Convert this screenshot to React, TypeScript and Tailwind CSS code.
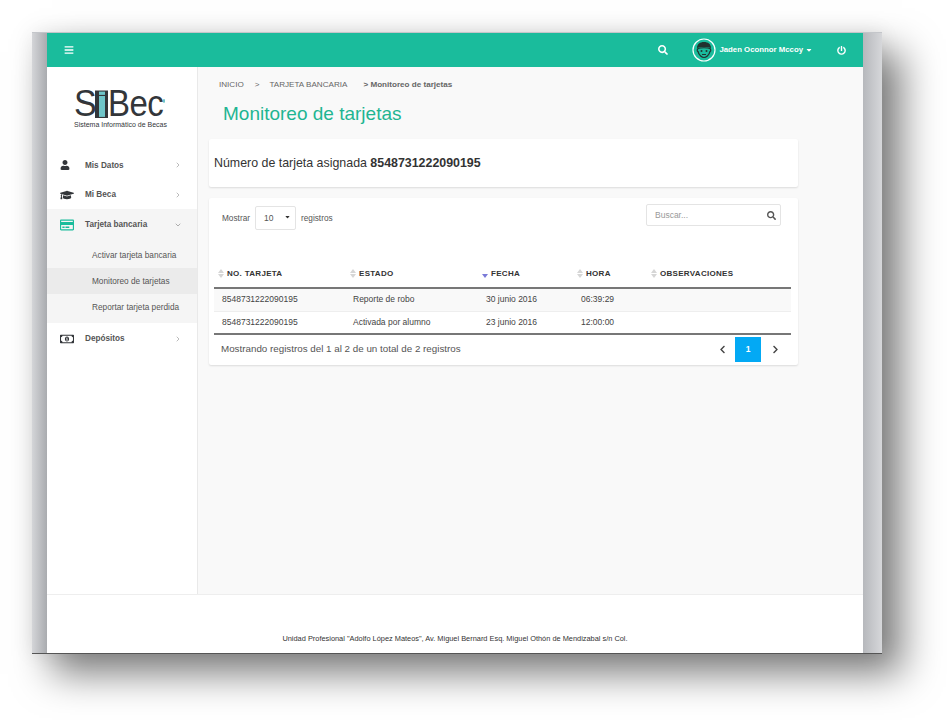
import { FaBars, FaSearch, FaPowerOff, FaUser, FaGraduationCap, FaRegCreditCard, FaRegMoneyBillAlt, FaChevronLeft, FaChevronRight, FaSortDown, FaCaretDown } from 'react-icons/fa'
import { LuChevronRight, LuChevronDown } from 'react-icons/lu'

function Avatar() {
	return (
		<svg width="24" height="24" viewBox="0 0 24 24" className="shrink-0">
			<circle cx="12" cy="12" r="11" fill="#1abc9c" stroke="#fff" strokeWidth="1.2" />
			<path d="M5 10c0-4 3-6 7-6s7 2 7 6c-2-1.500-12-1.500-14 0z" fill="#22332f" />
			<path d="M6 10.500c2-1 10-1 12 0 1 1 1 3 0 3-1 4-4 6-6 6s-5-2-6-6c-1 0-1-2 0-3z" fill="#1abc9c" stroke="#22332f" strokeWidth="1.2" />
			<circle cx="9.500" cy="13" r="1" fill="#22332f" />
			<circle cx="14.500" cy="13" r="1" fill="#22332f" />
			<path d="M10 16.500h4" stroke="#22332f" strokeWidth="1" />
		</svg>
	)
}

function Logo() {
	return (
		<div className="flex w-[91px] flex-col">
			<div className="relative flex h-[27px] origin-bottom scale-y-[1.1] items-end text-[#33363a]">
				<span className="w-[21px] text-[34px] font-normal leading-[27px]">S</span>
				<span className="flex h-[25px] w-[13px] flex-col items-center justify-between bg-[#33363a] py-[1px]">
					<span className="h-[3px] w-[6px] bg-[#6fc5c9]" />
					<span className="h-[19px] w-[6px] bg-[#6fc5c9]" />
				</span>
				<span className="text-[33px] leading-[27px] tracking-[-0.5px]">Bec</span>
				<span className="absolute right-0 top-[10px] h-[3px] w-[2px] bg-[#6fc5c9]" />
			</div>
			<span className="mt-[3px] whitespace-nowrap text-[7px] leading-[8px] text-[#33363a]">Sistema Informático de Becas</span>
		</div>
	)
}

function NavRow({ icon, label, open, teal, tall }: { icon: React.ReactNode; label: string; open?: boolean; teal?: boolean; tall?: boolean }) {
	return (
		<div className={`flex items-center pl-[13px] pr-[15px] ${tall ? 'h-[31px]' : 'h-[30px]'}`}>
			<span className={`flex w-[25px] items-center text-[14px] ${teal ? 'text-[#1abc9c]' : 'text-[#33363a]'}`}>{icon}</span>
			<span className="flex-1 pt-[2px] text-[8.2px] font-bold text-[#555]">{label}</span>
			{open ? <LuChevronDown className="text-[8px] text-[#888]" /> : <LuChevronRight className="text-[8px] text-[#999]" />}
		</div>
	)
}

function SortIcon({ active }: { active?: boolean }) {
	return (
		<span className="mr-[3px] inline-flex w-[6px] flex-col items-center align-middle">
			<span className={`h-0 w-0 border-x-[3px] border-b-[4px] border-x-transparent ${active ? 'border-b-transparent' : 'border-b-[#d6d6d6]'}`} />
			<span className={`mt-[1px] h-0 w-0 border-x-[3px] border-t-[4px] border-x-transparent ${active ? 'border-t-[#7a7ad8]' : 'border-t-[#d6d6d6]'}`} />
		</span>
	)
}

const rows = [
	['8548731222090195', 'Reporte de robo', '30 junio 2016', '06:39:29'],
	['8548731222090195', 'Activada por alumno', '23 junio 2016', '12:00:00'],
]

export default function App() {
	return (
		<div className="h-[720px] w-[947px] overflow-hidden bg-white pl-[32px] pt-[32px] font-['Liberation_Sans',Arial,sans-serif]">
			{/* ventana con sombra y bandas grises a los lados */}
			<div className="flex h-[622px] w-[850px] border-t border-b border-t-[#c4c6ca] border-b-[#555] bg-[linear-gradient(90deg,#d4d5d8_0,#a9abaf_15px,#b6b8bc_831px,#d6d7da_100%)] shadow-[20px_20px_36px_rgba(0,0,0,0.5),0_0_20px_rgba(0,0,0,0.08)]">
				<div className="ml-[15px] flex h-full w-[816px] flex-col bg-white">
					<header className="flex h-[34px] shrink-0 items-center bg-[#1abc9c] text-white">
						<FaBars className="ml-[17px] text-[10px]" />
						<div className="flex-1" />
						<FaSearch className="text-[10px]" />
						<div className="ml-[24px] flex items-center">
							<Avatar />
							<span className="ml-[3px] text-[7.8px] font-bold">Jaden Oconnor Mccoy</span>
							<FaCaretDown className="ml-[2px] text-[8px]" />
						</div>
						<FaPowerOff className="ml-[24px] mr-[17px] text-[9px]" />
					</header>

					<div className="flex flex-1">
						<aside className="w-[151px] shrink-0 border-r border-r-[#e9e9e9] bg-white">
							<div className="flex h-[83px] items-end justify-center pb-[21px] pr-[5px]">
								<Logo />
							</div>
							<NavRow icon={<FaUser className="text-[10px]" />} label="Mis Datos" />
							<div className="flex h-[29px] flex-col justify-center">
								<NavRow icon={<FaGraduationCap />} label="Mi Beca" />
							</div>
							<div className="bg-[#f5f5f5] pb-[3px]">
								<NavRow icon={<FaRegCreditCard />} label="Tarjeta bancaria" open teal tall />
								<div className="text-[8.25px] text-[#555]">
									<div className="flex h-[28px] items-center pl-[45px] pt-[5px]">Activar tarjeta bancaria</div>
									<div className="flex h-[26px] items-center bg-[#ebebeb] pl-[45px] pt-[3px]">Monitoreo de tarjetas</div>
									<div className="flex h-[26px] items-center pl-[45px] pt-[3px]">Reportar tarjeta perdida</div>
								</div>
							</div>
							<NavRow icon={<FaRegMoneyBillAlt />} label="Depósitos" tall />
						</aside>

						<main className="flex-1 bg-[#f9f9f9] pl-[11px] pr-[65px]">
							<div className="flex h-[34px] items-center pl-[10px] pt-[3px] text-[8.1px] text-[#666]">
								<span>INICIO</span>
								<span className="ml-[11px]">&gt;</span>
								<span className="ml-[10px]">TARJETA BANCARIA</span>
								<span className="ml-[16px] font-bold">&gt; Monitoreo de tarjetas</span>
							</div>
							<h1 className="h-[38px] pl-[14px] text-[19px] leading-[26px] text-[#1fb592]">Monitoreo de tarjetas</h1>

							<section className="flex h-[48px] items-center rounded-[2px] bg-white pl-[5px] text-[12.4px] text-[#333] shadow-[0_1px_2px_rgba(0,0,0,0.12)]">
								Número de tarjeta asignada&nbsp;<b>8548731222090195</b>
							</section>

							<section className="mt-[11px] h-[167px] rounded-[2px] bg-white px-[5px] shadow-[0_1px_2px_rgba(0,0,0,0.12)]">
								<div className="flex h-[63px] items-start justify-between pl-[8px] pr-[11px] pt-[6px] text-[8.25px] text-[#555]">
									<div className="flex items-center pt-[2px]">
										<span className="pt-[2px]">Mostrar</span>
										<span className="relative ml-[5px] flex h-[24px] w-[41px] items-center rounded-[2px] border border-[#e4e4e4] pl-[8px] text-[8.5px]">
											10
											<FaSortDown className="absolute right-[4px] top-[5px] text-[7px] text-[#333]" />
										</span>
										<span className="ml-[5px] pt-[2px]">registros</span>
									</div>
									<div className="mr-[1px] flex h-[22px] w-[135px] items-center justify-between rounded-[2px] border border-[#e4e4e4] pl-[8px] pr-[4px] text-[8.5px] text-[#999]">
										Buscar...
										<FaSearch className="text-[9px] text-[#555]" />
									</div>
								</div>

								<table className="w-[577px] table-fixed border-collapse text-[8.5px] text-[#444]">
									<thead>
										<tr className="h-[27px] border-b-2 border-b-[#777] text-left text-[8px] font-bold text-[#333]">
											<th className="w-[132px] pl-[4px] tracking-[0.3px]"><SortIcon />NO. TARJETA</th>
											<th className="w-[132px] pl-[4px] tracking-[0.3px]"><SortIcon />ESTADO</th>
											<th className="w-[95px] pl-[4px] tracking-[0.3px]"><SortIcon active />FECHA</th>
											<th className="w-[74px] pl-[4px] tracking-[0.3px]"><SortIcon />HORA</th>
											<th className="pl-[4px] tracking-[0.3px]"><SortIcon />OBSERVACIONES</th>
										</tr>
									</thead>
									<tbody>
										{rows.map((r, i) => (
											<tr key={i} className={`h-[23px] ${i === 0 ? 'border-b border-b-[#eee] bg-[#f9f9f9]' : 'border-b-2 border-b-[#777]'}`}>
												<td className="pl-[8px]">{r[0]}</td>
												<td className="pl-[7px]">{r[1]}</td>
												<td className="pl-[8px]">{r[2]}</td>
												<td className="pl-[8px]">{r[3]}</td>
												<td />
											</tr>
										))}
									</tbody>
								</table>

								<div className="flex h-[29px] items-center justify-between pl-[7px] text-[9.8px] text-[#555]">
									<span>Mostrando registros del 1 al 2 de un total de 2 registros</span>
									<div className="mr-[13px] flex items-center">
										<FaChevronLeft className="mr-[8px] text-[9px] text-[#444]" />
										<span className="flex h-[25px] w-[26px] items-center justify-center bg-[#03a9f4] text-[8.5px] font-bold text-white">1</span>
										<FaChevronRight className="ml-[10px] text-[9px] text-[#444]" />
									</div>
								</div>
							</section>
						</main>
					</div>

					<footer className="flex h-[59px] shrink-0 items-end justify-center border-t border-t-[#eee] bg-white pb-[9px] text-[7.4px] text-[#333]">
						Unidad Profesional "Adolfo López Mateos", Av. Miguel Bernard Esq. Miguel Othón de Mendizabal s/n Col.
					</footer>
				</div>
			</div>
		</div>
	)
}
